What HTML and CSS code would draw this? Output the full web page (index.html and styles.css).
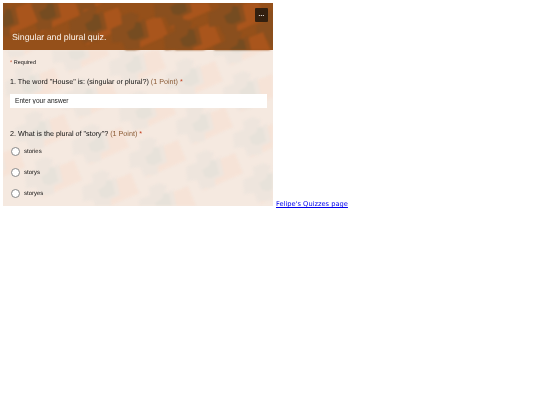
FILE: index.html
```html
<!DOCTYPE html>
<html lang="en">
<head>
  <meta charset="UTF-8">
  <meta name="viewport" content="width=device-width, initial-scale=1.0">
  <title>Singular and plural quiz</title>
  <link rel="stylesheet" href="styles.css">
</head>
<body>

  <div class="quiz">
    <svg class="wallpaper" width="270" height="156" viewBox="3 50 270 156" aria-hidden="true">
      <defs>
        <g id="motif">
          <path class="m-paper" d="M-2 20 L38 2 L30 -18 L8 -9 Z"/>
          <path class="m-blob" d="M-19 -4 L-8 -9 L-9 -17 L1 -21 L9 -18 L7 -11 L15 -14 L19 4 L10 8 L10 16 L-4 18 L-8 9 L-18 10 Z"/>
          <path class="m-dark" d="M-3 -1 L4 -5 L6 -11 L11 -10 L14 3 L6 7 L0 6 Z"/>
        </g>
      </defs>
      <use href="#motif" x="195" y="125"/><use href="#motif" x="252" y="138"/>
      <use href="#motif" x="138" y="112"/><use href="#motif" x="81" y="99"/>
      <use href="#motif" x="24" y="86"/><use href="#motif" x="148" y="158"/>
      <use href="#motif" x="205" y="171"/><use href="#motif" x="262" y="184"/>
      <use href="#motif" x="91" y="145"/><use href="#motif" x="34" y="132"/>
      <use href="#motif" x="101" y="191"/><use href="#motif" x="158" y="204"/>
      <use href="#motif" x="44" y="178"/><use href="#motif" x="242" y="92"/>
      <use href="#motif" x="185" y="79"/><use href="#motif" x="128" y="66"/>
      <use href="#motif" x="71" y="53"/><use href="#motif" x="232" y="46"/>
      <use href="#motif" x="175" y="33"/><use href="#motif" x="14" y="40"/>
      <use href="#motif" x="-13" y="165"/>
    </svg>

    <header class="banner">
      <svg class="wallpaper" width="270" height="47" viewBox="3 3 270 47" aria-hidden="true">
        <use href="#motif" x="42" y="13"/><use href="#motif" x="88" y="25"/>
        <use href="#motif" x="130" y="33"/><use href="#motif" x="173" y="8"/>
        <use href="#motif" x="183" y="40"/><use href="#motif" x="227" y="17"/>
        <use href="#motif" x="275" y="30"/><use href="#motif" x="233" y="50"/>
        <use href="#motif" x="0" y="20"/><use href="#motif" x="85" y="-8"/>
      </svg>
      <h1>Singular and plural quiz.</h1>
      <button class="more" type="button">···</button>
    </header>

    <form class="questions">
      <p class="required"><span class="star">*</span> Required</p>

      <div class="question">
        <p class="title">1. The word "House" is: (singular or plural?) <span class="points">(1 Point)</span> <span class="star">*</span></p>
        <input type="text" class="answer" placeholder="Enter your answer">
      </div>

      <div class="question second">
        <p class="title">2. What is the plural of "story"? <span class="points">(1 Point)</span> <span class="star">*</span></p>
        <div class="options">
          <label class="option"><span class="radio"></span>stories</label>
          <label class="option"><span class="radio"></span>storys</label>
          <label class="option"><span class="radio"></span>storyes</label>
        </div>
      </div>
    </form>
  </div><a class="page-link" href="#">Felipe's Quizzes page</a>

</body>
</html>
```

FILE: styles.css
```css
* {
  box-sizing: border-box;
}

body {
  margin: 3px;
  background: #fff;
  font-family: "DejaVu Sans", Verdana, sans-serif;
  font-size: 6.7px;
  text-rendering: geometricPrecision;
}

.page-link {
  color: #0000ee;
  margin-left: 3px;
  filter: blur(0.25px);
}

.quiz {
  position: relative;
  display: inline-block;
  width: 270px;
  height: 203px;
  overflow: hidden;
  background: #f5e9e0;
  font-family: "Liberation Sans", Arial, sans-serif;
  color: #111;
  filter: blur(0.25px);
  --paper: #f6e3d7;
  --blob: #eee5dd;
  --dark: #e7e2da;
}

.wallpaper {
  position: absolute;
  left: 0;
  bottom: 0;
  display: block;
  filter: blur(0.8px);
}

.banner {
  position: relative;
  height: 47px;
  background: #95501a;
  --paper: #a9551c;
  --blob: #8a4f1e;
  --dark: #754c21;
}

.banner h1 {
  position: relative;
  margin: 0;
  padding: 28px 0 0 9px;
  font-size: 8.8px;
  font-weight: normal;
  line-height: 12px;
  color: #fbf3ec;
}

.more {
  position: absolute;
  top: 5px;
  right: 5px;
  width: 13px;
  height: 14px;
  padding: 0;
  border: none;
  border-radius: 1px;
  background: #33200f;
  color: #fff;
  font-size: 6px;
  font-weight: bold;
  line-height: 14px;
}

.m-paper { fill: var(--paper); }
.m-blob { fill: var(--blob); }
.m-dark { fill: var(--dark); }

.questions {
  position: relative;
  padding: 9px 6px 0 7px;
}

.required {
  margin: 0;
  font-size: 5.5px;
  line-height: 8px;
}

.star {
  color: #c43e1c;
}

.question {
  margin-top: 10px;
}

.second {
  margin-top: 21px;
}

.title {
  margin: 0 0 7px;
  font-size: 7.2px;
  line-height: 10px;
}

.points {
  color: #8a5a34;
}

.answer {
  display: block;
  width: 100%;
  height: 14px;
  padding: 0 5px 1px;
  border: none;
  background: #fff;
  font-family: inherit;
  font-size: 6.6px;
}

.answer::placeholder {
  color: #222;
}

.options {
  display: flex;
  flex-direction: column;
  gap: 12px;
  padding-left: 1px;
  padding-top: 1px;
}

.option {
  display: flex;
  align-items: center;
  gap: 4px;
  height: 9px;
  font-size: 6px;
}

.radio {
  width: 9px;
  height: 9px;
  border: 1px solid #888;
  border-radius: 50%;
  background: #fff;
}
```
